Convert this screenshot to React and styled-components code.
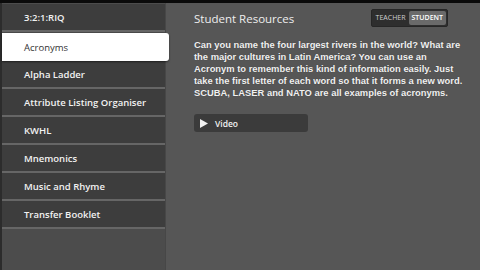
import React from "react";
import styled, { createGlobalStyle } from "styled-components";

const Global = createGlobalStyle`
  html, body { margin: 0; padding: 0; background: #555555; }
  body { width: 480px; height: 270px; overflow: hidden; }
  #root { width: 480px; height: 270px; }
`;

const Screen = styled.div`
  width: 480px;
  height: 270px;
  display: flex;
  flex-direction: column;
  background: #565656;
`;

const TopBar = styled.div`
  height: 3px;
  background: #0a0a0a;
  flex: none;
`;

const Body = styled.div`
  flex: 1;
  display: grid;
  grid-template-columns: 166px minmax(0, 1fr);
  min-height: 0;
`;

const Sidebar = styled.nav`
  background: #4c4c4c;
  border-left: 2px solid #2c2c2c;
  border-right: 1px solid #474747;
  display: flex;
  flex-direction: column;
  padding-top: 1px;
`;

const Item = styled.div`
  flex: none;
  height: ${(p) => (p.$active ? "28px" : "26px")};
  margin-top: ${(p) => (p.$active ? "1px" : "0")};
  display: flex;
  align-items: center;
  padding-left: 22px;
  font-family: "Open Sans", sans-serif;
  font-size: 9.5px;
  font-weight: ${(p) => (p.$active ? 400 : 600)};
  color: ${(p) => (p.$active ? "#333" : "#f2f2f2")};
  background: ${(p) => (p.$active ? "#ffffff" : "#3d3d3d")};
  border-bottom: ${(p) => (p.$active ? "none" : "2px solid #666")};
  margin-right: ${(p) => (p.$active ? "-4px" : "0")};
  border-radius: ${(p) => (p.$active ? "0 3px 3px 0" : "0")};
  box-shadow: ${(p) => (p.$active ? "0 1px 2px rgba(0,0,0,0.5)" : "none")};
  position: relative;
  z-index: ${(p) => (p.$active ? 1 : 0)};
`;

const Main = styled.main`
  padding: 6px 32px 0 28px;
  display: flex;
  flex-direction: column;
`;

const Header = styled.div`
  display: flex;
  align-items: center;
  justify-content: space-between;
  height: 18px;
`;

const Title = styled.h1`
  margin: 0;
  font-family: "Open Sans", sans-serif;
  font-weight: 400;
  font-size: 11.5px;
  color: #eeeeee;
`;

const Toggle = styled.div`
  display: flex;
  background: #2e2e2e;
  border: 1px solid #262626;
  border-radius: 2px;
  padding: 1px;
`;

const ToggleTab = styled.span`
  font-family: "Open Sans", sans-serif;
  font-size: 7px;
  font-weight: ${(p) => (p.$on ? 600 : 400)};
  color: ${(p) => (p.$on ? "#ffffff" : "#cfcfcf")};
  background: ${(p) => (p.$on ? "#6a6a6a" : "transparent")};
  border-radius: 2px;
  padding: 3px 3px;
  line-height: 8px;
`;

const Para = styled.p`
  margin: 12px 0 0 0;
  font-family: "Liberation Sans", Arial, sans-serif;
  font-size: 9.4px;
  font-weight: 700;
  line-height: 12px;
  color: #f0f0f0;
  white-space: nowrap;
  text-shadow: 0 0 1px rgba(0,0,0,0.3);
`;

const VideoButton = styled.div`
  margin-top: 15px;
  width: 114px;
  height: 18px;
  background: #3b3b3b;
  border-radius: 3px;
  display: flex;
  align-items: center;
  gap: 7px;
  padding-left: 6px;
  box-sizing: border-box;
  font-family: "Open Sans", sans-serif;
  font-size: 8.5px;
  font-weight: 600;
  color: #f2f2f2;
`;

const items = [
  "3:2:1:RIQ",
  "Acronyms",
  "Alpha Ladder",
  "Attribute Listing Organiser",
  "KWHL",
  "Mnemonics",
  "Music and Rhyme",
  "Transfer Booklet",
];

const lines = [
  "Can you name the four largest rivers in the world? What are",
  "the major cultures in Latin America? You can use an",
  "Acronym to remember this kind of information easily. Just",
  "take the first letter of each word so that it forms a new word.",
  "SCUBA, LASER and NATO are all examples of acronyms.",
];

export default function App() {
  return (
    <>
      <Global />
      <Screen>
        <TopBar />
        <Body>
          <Sidebar>
            {items.map((t) => (
              <Item key={t} $active={t === "Acronyms"}>
                {t}
              </Item>
            ))}
          </Sidebar>
          <Main>
            <Header>
              <Title>Student Resources</Title>
              <Toggle>
                <ToggleTab>TEACHER</ToggleTab>
                <ToggleTab $on>STUDENT</ToggleTab>
              </Toggle>
            </Header>
            <Para>
              {lines.map((l, i) => (
                <React.Fragment key={i}>
                  {l}
                  {i < lines.length - 1 && <br />}
                </React.Fragment>
              ))}
            </Para>
            <VideoButton>
              <svg width="8" height="9" viewBox="0 0 8 9">
                <path d="M0 0 L8 4.5 L0 9 Z" fill="#f2f2f2" />
              </svg>
              Video
            </VideoButton>
          </Main>
        </Body>
      </Screen>
    </>
  );
}
